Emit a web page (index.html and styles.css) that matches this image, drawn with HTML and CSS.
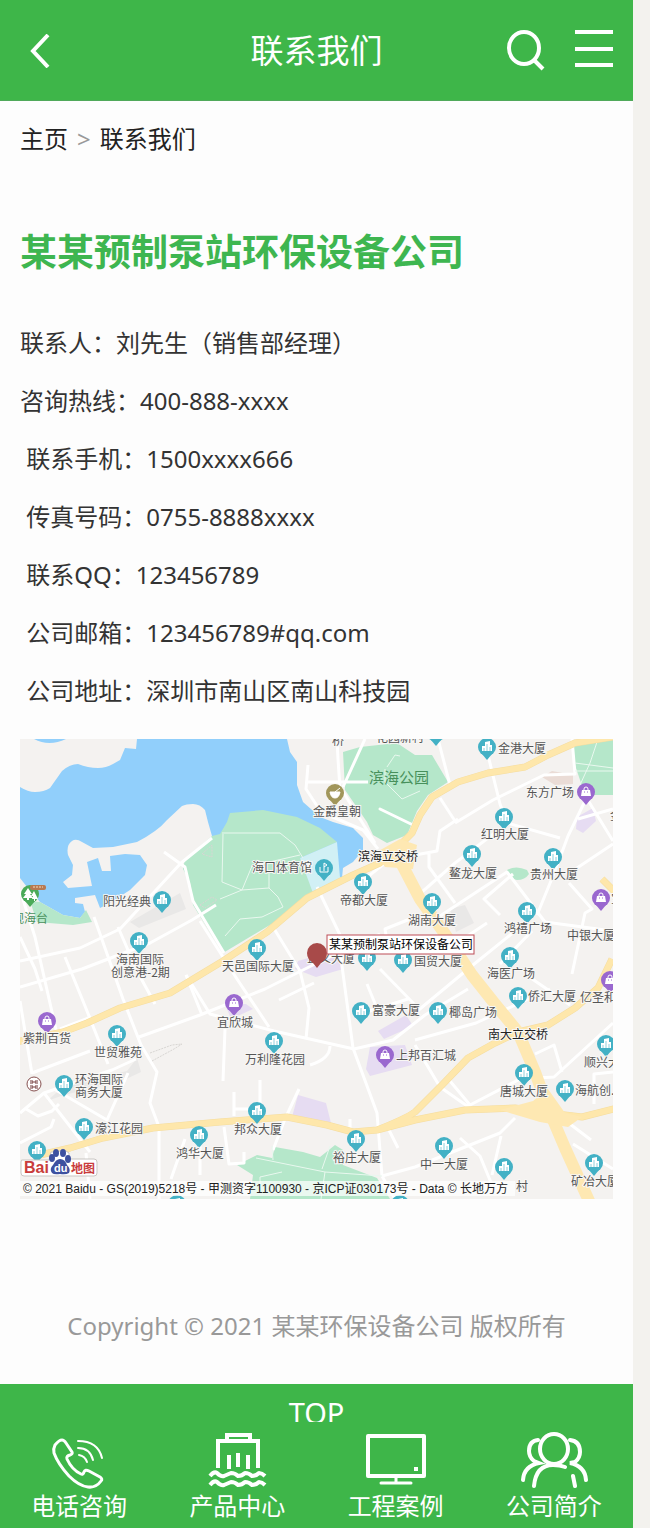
FILE: index.html
```html
<!DOCTYPE html>
<html lang="zh-CN">
  <head>
    <meta charset="utf-8">
    <meta name="viewport" content="width=device-width, initial-scale=1.0">

    <title>联系我们</title>

    <link rel="stylesheet" href="styles.css">
  </head>
  <body>
    <header class="header">
      <a class="back" href="#" aria-label="返回">
        <svg width="20" height="34" viewBox="0 0 20 34"><path d="M18 1L3 17l15 16" fill="none" stroke="#fff" stroke-width="4"/></svg>
      </a>
      <h1 class="title">联系我们</h1>
      <div class="tools">
        <button type="button" aria-label="搜索">
          <svg width="40" height="42" viewBox="0 0 40 42" fill="none" stroke="#fff" stroke-width="4"><ellipse cx="19" cy="19" rx="15" ry="16"/><path d="M28 30l10 10"/></svg>
        </button>
        <button type="button" aria-label="菜单">
          <svg width="38" height="40" viewBox="0 0 38 40" stroke="#fff" stroke-width="4"><path d="M0 2h38M0 19h38M0 35h38"/></svg>
        </button>
      </div>
    </header>

    <nav class="crumbs">
      <a href="#">主页</a><span>&gt;</span><a href="#">联系我们</a>
    </nav>

    <main class="content">
      <h2 class="company">某某预制泵站环保设备公司</h2>
      <div class="info">
        <p>联系人：刘先生（销售部经理）</p>
        <p>咨询热线：400-888-xxxx</p>
        <p>&nbsp;联系手机：1500xxxx666</p>
        <p>&nbsp;传真号码：0755-8888xxxx</p>
        <p>&nbsp;联系QQ：123456789</p>
        <p>&nbsp;公司邮箱：123456789#qq.com</p>
        <p>&nbsp;公司地址：深圳市南山区南山科技园</p>
      </div>

      <svg class="map" viewBox="0 0 593 460" role="img" aria-label="公司地图">
        <defs>
          <g id="drop">
            <circle r="9"/>
            <path d="M-5 7L0 13l5-6z"/>
          </g>
          <g id="office">
            <use href="#drop" fill="#43b1c5"/>
            <path d="M-5 4V-1h3v-4l5-1v4h2v6z" fill="#fff"/>
            <path d="M0 4v-7M3 4v-4M-3 4V1" stroke="#8fd0dc" fill="none"/>
          </g>
          <g id="shop">
            <use href="#drop" fill="#9a68cf"/>
            <path d="M-4-2h8l1 6H-5z" fill="#fff"/>
            <path d="M-2-2v-1a2 2 0 0 1 4 0v1" fill="none" stroke="#fff"/>
            <path d="M-2 0h1M1 0h1" stroke="#9a68cf"/>
          </g>
        </defs>

        <rect class="land" width="593" height="460"/>

        <!-- water -->
        <path class="water" d="M0 48Q8 53 15 53 24 53 30 49L42 32Q50 25 58 25 68 29 78 29 86 29 93 25L100 21 105 9 116 10 117 0H267L270 13 277 23V46L283 63 300 78 313 83 333 89 343 99V111L333 123 323 129 322 139 316 136 200 110 192 97 188 83 185 71Q180 65 173 65 166 65 162 67L147 81Q138 92 117 103L93 108 73 109 62 103Q56 99 52 102 46 106 48 116L53 126 52 136 43 143 48 149 72 147 67 123 78 119 82 132H91L90 117 105 115 120 116 127 126 125 136 110 151 90 164 80 169 75 156 55 159V164L63 165 65 173 60 179 43 176 20 163 7 148 0 139z"/>
        <path class="water" d="M14 0q15 8 32 0z"/>

        <!-- parks -->
        <path class="park" d="M192 97L200 95 207 83 210 74 243 71 277 78 300 89 317 103 280 119 303 149 255 183 203 214 173 166 170 143 163 130 165 120z"/>
        <path class="venue" d="M280 119L317 103 320 139 293 154z"/>
        <path class="park" d="M323 13L340 8 377 4 395 16H412L428 43 408 56 397 72 387 96 367 104 353 96 347 83 325 51z"/>
        <path class="park" d="M553 4L575 0H593V56L565 56 555 26z"/>
        <path class="park" d="M487 131q9-5 20 0l2 4q-4 6-12 6-9-2-10-10z"/>
        <path class="park" d="M255 408L283 413 300 418 315 406 323 411V426L357 439 370 460H230L233 436 217 426 237 416 252 419z"/>
        <path class="park" d="M10 162L20 163 43 176 60 179 66 171 72 183 53 186 17 183z"/>
        <g class="mall">
          <path d="M278 222L313 212 323 230 296 238 275 230z"/>
          <path d="M278 356L306 364 311 384 272 378z"/>
          <path d="M350 308L385 306 392 326 350 337 346 330z"/>
          <path d="M358 292L386 276 393 287 364 300z"/>
          <path d="M557 78L573 69 576 82 563 94 556 90z"/>
          <path d="M205 265h21l7 5-22 10z"/>
        </g>
        <path class="block" d="M110 183L160 154 166 170 119 189zM27 362L44 347 107 332 117 319 121 333 102 342 44 356zM430 170L445 166 454 184 436 193z"/>
        <path d="M522 38L532 32 553 36V45L535 46z" fill="#eadcd6"/>

        <!-- side streets -->
        <g class="street">
          <path d="M192 99L161 124 100 190 60 209 0 222M144 113L165 128 173 162 204 214"/>
          <path d="M0 248L62 230 130 204 172 181 196 166M0 198L15 230 22 252M74 178L103 260 121 306 137 333 130 364 139 388V460"/>
          <path d="M0 151L15 198 37 295M45 218L65 267 88 325M98 188L117 232 135 265"/>
          <path d="M0 262L12 335M12 334L70 312M0 374L24 354 92 331 116 320M40 290L71 278M119 298L180 276 245 250 303 221 360 195"/>
          <path d="M24 354L70 413M34 350L87 381 108 334M0 404L31 388 34 380M6 370L18 377 32 372 39 365"/>
          <path d="M249 288L217 240 180 182M166 236L190 275 254 292 334 310 373 301 405 276 448 250"/>
          <path d="M253 188L280 232 289 269 286 300M259 261L294 244M297 148L320 196V212L333 309 357 374 362 437M182 276L166 236"/>
          <path d="M320 50L318 20 317 0M288 26L286 50 301 73 343 91 358 110M286 43H348M323 48L345 0M320 48L355 104"/>
          <path d="M340 144L390 104M395 178L365 190 367 202"/>
          <path d="M418 0L430 46 438 42M466 8L480 65 487 84 540 99M435 84L473 61 524 36 555 35 552 0"/>
          <path d="M438 80L420 92 417 112 395 116M420 59L435 82M409 115V128L435 164M394 160L435 124 480 90"/>
          <path d="M566 60L548 97 535 132 517 176M566 58L593 102M548 135L593 105M593 70L558 80"/>
          <path d="M420 177L487 133 525 183 593 192"/>
          <path d="M493 135L464 160 480 176M549 144L572 170 565 174 552 235M467 184L425 212M505 184L448 230 395 274M512 192L480 225"/>
          <path d="M395 306L420 348 450 369M430 342L450 366 500 340 534 338 593 284M395 301L456 284 530 250M505 235L550 266"/>
          <path d="M360 230L399 270M347 245L356 267M340 275L388 260M310 307Q310 320 290 326"/>
          <path d="M515 315L534 306 542 333M574 365V335L593 333"/>
          <path d="M362 437L395 428 480 394 495 379M481 397L472 436M440 399L460 417 472 446M553 405L593 430M550 385L571 401"/>
          <path d="M205 290L203 342M214 353V377M240 341V370M214 370h23M279 350L265 380 253 411M204 388L209 425 224 424V413"/>
          <path d="M66 414L70 460M165 400L151 440M368 389L378 409M330 380V393M362 437L375 460M180 406V436"/>
        </g>

        <g class="path">
          <path d="M202 94H260L275 106 283 119M203 95L202 143 222 151 232 127 280 116M249 132V149L258 158 263 168M205 197L220 180 242 178 263 168M200 160L222 151 249 149"/>
          <path d="M365 30V43L382 60 400 52M367 28L375 16 380 17"/>
          <path d="M555 24L593 29M555 32H593M560 46L570 24 578 0"/>
          <path d="M236 419L305 433 362 437M302 430L310 407M252 407L253 421M240 448V438L262 433M301 460L305 433"/>
        </g>
        <path d="M360 70L393 86" fill="none" stroke="#fff" stroke-width="3" stroke-linecap="round"/>

        <!-- main roads -->
        <g class="casing">
          <path id="roadA" d="M-4 303L43 293 67 284 100 269 150 254 203 222 247 193 287 159 333 136 360 124 377 109 392 94 400 76 412 58 438 43 468 34 505 28 528 16 555 4 593-2"/>
          <path id="roadC" d="M20 416L50 409 83 399 133 389 200 383 267 378 307 386 333 393 357 391 395 381 445 371 495 369 528 374 562 378 597 369M357 391Q385 380 395 373L422 346 448 319 475 304 498 293 528 286 555 269 578 249 592 220M582 140L597 155"/>
        </g>
        <g class="main">
          <use href="#roadA"/>
          <use href="#roadC"/>
        </g>
        <path class="highway" d="M377 116L400 160 425 195 452 236 475 265 498 293 515 333 528 369 545 409 570 464"/>
        <path class="junction" d="M355 114L380 100 397 106 393 130 365 128zM480 371L513 362 528 350 545 374 562 378 548 388 520 383z"/>
        <path d="M130 314l22-8 10-1-8 5-22 12M182 115l10-9v12zM180 166l12-8 5 3-12 8z" fill="none" stroke="#d8d6d3" stroke-dasharray="2 1"/>

        <!-- places -->
        <use href="#office" x="467" y="8"/>
        <use href="#office" x="416" y="-6"/>
        <use href="#office" x="484" y="78"/>
        <use href="#office" x="452" y="115"/>
        <use href="#office" x="533" y="118"/>
        <use href="#office" x="412" y="163"/>
        <use href="#office" x="507" y="172"/>
        <use href="#drop" x="304" y="129" fill="#43b1c5"/>
        <path d="M304 132v-8l3 2-3 2M300 128v5h8v-5" fill="none" stroke="#fff"/>
        <use href="#office" x="343" y="143"/>
        <use href="#office" x="142" y="161"/>
        <use href="#office" x="119" y="202"/>
        <use href="#office" x="237" y="209"/>
        <use href="#office" x="347" y="219"/>
        <use href="#office" x="383" y="221"/>
        <use href="#office" x="490" y="217"/>
        <use href="#office" x="498" y="257"/>
        <use href="#office" x="418" y="272"/>
        <use href="#office" x="341" y="272"/>
        <use href="#office" x="97" y="295"/>
        <use href="#office" x="254" y="302"/>
        <use href="#office" x="44" y="345"/>
        <use href="#office" x="504" y="334"/>
        <use href="#office" x="545" y="350"/>
        <use href="#office" x="586" y="305"/>
        <use href="#office" x="64" y="388"/>
        <use href="#office" x="237" y="372"/>
        <use href="#office" x="179" y="396"/>
        <use href="#office" x="336" y="400"/>
        <use href="#office" x="424" y="407"/>
        <use href="#office" x="484" y="428"/>
        <use href="#office" x="574" y="424"/>
        <use href="#office" x="17" y="411"/>
        <use href="#office" x="157" y="465"/>
        <use href="#office" x="380" y="465"/>
        <use href="#shop" x="566" y="53"/>
        <use href="#shop" x="581" y="159"/>
        <use href="#shop" x="590" y="241"/>
        <use href="#shop" x="27" y="282"/>
        <use href="#shop" x="214" y="264"/>
        <use href="#shop" x="365" y="316"/>

        <use href="#drop" x="315" y="54" fill="#a1965b"/>
        <path d="M310 53h10q-1 6-5 6t-5-6M315 53l5-4" fill="#fff" stroke="#fff"/>
        <use href="#drop" x="10" y="155" fill="#4aaa58"/>
        <path d="M8 149l-4 6h2l-3 4h4v2h2v-2h4l-3-4h2zM14 152l-3 5h2l-1 3h2v2h1v-2h3z" fill="#fff"/>
        <rect x="10" y="146" width="16" height="5" rx="2" fill="#b77952"/>
        <path d="M13 148h10" stroke="#f4dfbd" stroke-dasharray="2 1"/>
        <circle cx="14" cy="345" r="7" fill="#fff" stroke="#86504f" stroke-width="1"/>
        <path d="M10 342h3v2h-3M18 342h-3v2h3M10 349h3v-2h-3M18 349h-3v-2h3" fill="none" stroke="#713939"/>

        <g class="names">
          <text x="312" y="6">桥</text>
          <text x="356" y="3">花园新村</text>
          <text x="478" y="14">金港大厦</text>
          <text x="506" y="58">东方广场</text>
          <text x="590" y="81">金</text>
          <text x="293" y="77">金爵皇朝</text>
          <text x="461" y="100">红明大厦</text>
          <text x="338" y="122" class="dark">滨海立交桥</text>
          <text x="232" y="133">海口体育馆</text>
          <text x="429" y="139">鳌龙大厦</text>
          <text x="510" y="140">贵州大厦</text>
          <text x="83" y="167">阳光经典</text>
          <text x="320" y="166">帝都大厦</text>
          <text x="388" y="186">湖南大厦</text>
          <text x="484" y="194">鸿禧广场</text>
          <text x="547" y="201">中银大厦</text>
          <text x="591" y="164">宝</text>
          <text x="96" y="225">海南国际</text>
          <text x="91" y="238">创意港-2期</text>
          <text x="202" y="232">天邑国际大厦</text>
          <text x="287" y="224">正义大厦</text>
          <text x="394" y="227">国贸大厦</text>
          <text x="467" y="239">海医广场</text>
          <text x="508" y="262">侨汇大厦</text>
          <text x="560" y="263">亿圣和</text>
          <text x="352" y="276">富豪大厦</text>
          <text x="429" y="278">椰岛广场</text>
          <text x="197" y="288">宜欣城</text>
          <text x="3" y="304">紫荆百货</text>
          <text x="74" y="318">世贸雅苑</text>
          <text x="225" y="325">万利隆花园</text>
          <text x="376" y="321">上邦百汇城</text>
          <text x="468" y="300" class="dark">南大立交桥</text>
          <text x="564" y="328">顺兴大</text>
          <text x="55" y="345">环海国际</text>
          <text x="55" y="358">商务大厦</text>
          <text x="480" y="357">唐城大厦</text>
          <text x="555" y="356">海航创...</text>
          <text x="75" y="394">濠江花园</text>
          <text x="214" y="395">邦众大厦</text>
          <text x="156" y="419">鸿华大厦</text>
          <text x="313" y="423">裕庄大厦</text>
          <text x="400" y="430">中一大厦</text>
          <text x="551" y="447">矿冶大厦</text>
          <text x="496" y="452">村</text>
        </g>
        <text class="park-name scenic" x="349" y="44">滨海公园</text>
        <text class="park-name" x="-8" y="184">观海台</text>

        <!-- company marker -->
        <path d="M287 214a10 10 0 0 1 20 0q0 6-6 10l-4 5-4-5q-6-4-6-10z" fill="#a84a49"/>
        <rect x="307" y="196" width="147" height="19" fill="#fff" stroke="#bd4d56"/>
        <text class="marker-name" x="309" y="210">某某预制泵站环保设备公司</text>

        <!-- map provider -->
        <rect x="0" y="442" width="495" height="15" fill="#fff" opacity=".72"/>
        <path d="M3 421h26l2-8h7l5-3 6 4v6h25q3 0 3 3v11q0 3-3 3H4q-3 0-3-3v-11q0-3 2-2z" fill="#fff" stroke="#c9c6c3"/>
        <text class="logo" x="4" y="434">Bai</text>
        <g fill="#3d51a0">
          <path d="M40 420q-4 0-7 6-4 4-1 8 2 2 8 1 6 1 9-1 2-4-2-8-2-6-7-6z"/>
          <ellipse cx="32" cy="419" rx="3" ry="4"/>
          <ellipse cx="36" cy="414" rx="3" ry="4"/>
          <ellipse cx="43" cy="414" rx="3" ry="4"/>
          <ellipse cx="48" cy="420" rx="3" ry="4"/>
        </g>
        <text class="logo-du" x="34" y="433">du</text>
        <text class="logo-map" x="51" y="434">地图</text>
        <text class="source" x="3" y="454">© 2021 Baidu - GS(2019)5218号 - 甲测资字1100930 - 京ICP证030173号 - Data © 长地万方</text>
      </svg>
    </main>

    <footer class="copyright">Copyright © 2021 某某环保设备公司 版权所有</footer>
    <a class="top" href="#">TOP</a>

    <nav class="tabbar">
      <a href="#">
        <svg width="60" height="60" viewBox="0 0 60 60" fill="none" stroke="#fff" stroke-width="3" stroke-linecap="round" stroke-linejoin="round">
          <path d="M6 15q4-5 7-5 2 0 4 3l6 9q1 2-2 3-4 1-3 4 5 11 14 15 2 1 3-2 1-3 5-1l11 6q3 2 1 4-5 7-13 6Q30 56 20 46 9 34 5 23q-1-4 1-8z"/>
          <path stroke-width="2" d="M29 11q20 0 24 17M29 18q12 0 15 12M30 25q6 1 8 7"/>
        </svg>
        <span>电话咨询</span>
      </a>
      <a href="#">
        <svg width="60" height="60" viewBox="0 0 60 60" fill="none" stroke="#fff" stroke-width="4">
          <path d="M11 38V11h40v27M20 10V5h23v5M22 25v14M31 23v14M41 25v14"/>
          <path stroke-linejoin="round" d="M3 46q4-5 7-3 4 4 7 3l7-3q4 0 7 3 4 0 7-3 4 0 7 3 4 0 7-3 3 0 6 3M3 55q4-5 7-3 4 4 7 3l7-3q4 0 7 3 4 0 7-3 4 0 7 3 4 0 7-3 3 0 6 3"/>
        </svg>
        <span>产品中心</span>
      </a>
      <a href="#">
        <svg width="60" height="60" viewBox="0 0 60 60" fill="none" stroke="#fff" stroke-width="4">
          <path stroke-linejoin="round" d="M2 6h56v40H2z"/>
          <path stroke-width="3" stroke-linecap="round" d="M30 48v4M15 53h30"/>
          <path d="M48 39h4"/>
        </svg>
        <span>工程案例</span>
      </a>
      <a href="#">
        <svg width="68" height="60" viewBox="0 0 68 60" fill="none" stroke="#fff" stroke-width="4" stroke-linecap="round">
          <ellipse cx="34" cy="19" rx="14" ry="15"/>
          <path d="M14 56q2-21 19-21 7 0 12 2M53 46l2 10M18 10Q9 11 9 21q0 6 5 10l5 2Q4 36 3 50M50 10q10 1 10 12 0 6-5 10l-5 1q15 3 16 17"/>
        </svg>
        <span>公司简介</span>
      </a>
    </nav>
  </body>
</html>
```

FILE: styles.css
```css
* {
  box-sizing: border-box;
}
body {
  margin: 0;
  padding-right: 17px;
  font-family: "Noto Sans", "Noto Sans CJK SC", sans-serif;
  font-size: 24px;
  color: #333;
  background: linear-gradient(to left, #f3f2ee 17px, #fdfdfd 17px);
}
a {
  color: inherit;
  text-decoration: none;
}
h1, h2, p {
  margin: 0;
}
svg {
  display: block;
}
.header {
  display: grid;
  grid-template-columns: 1fr auto 1fr;
  align-items: center;
  height: 101px;
  padding: 2px 20px 0;
  color: #fff;
  background-color: #3eb649;
  border-bottom: 1px solid #50a95a;
}
.back {
  padding-left: 10px;
}
.title {
  font-size: 33px;
  font-weight: 400;
  line-height: 48px;
}
.tools {
  display: flex;
  justify-content: flex-end;
  align-items: center;
  gap: 30px;
}
.tools button {
  padding: 0 0 2px;
  border: 0;
  background: none;
  cursor: pointer;
}
.crumbs {
  display: flex;
  gap: 9px;
  padding: 18px 20px;
  line-height: 40px;
  color: #222;
}
.crumbs span {
  color: #999;
}
.content {
  padding: 45px 20px 0;
}
.company {
  font-size: 37px;
  line-height: 60px;
  color: #3eb650;
}
.info {
  padding: 32px 0 19px;
  line-height: 58px;
}
.map {
  width: 100%;
  height: auto;
  overflow: hidden;
}
.copyright {
  padding: 97px 20px 28px;
  line-height: 60px;
  text-align: center;
  color: #999;
}
.top {
  display: block;
  height: 38px;
  overflow: hidden;
  font-size: 29px;
  line-height: 58px;
  text-align: center;
  color: #fff;
  background-color: #3eb649;
}
.tabbar {
  position: sticky;
  bottom: 0;
  display: grid;
  grid-template-columns: repeat(4, 1fr);
  padding: 8px 0 6px;
  line-height: 32px;
  color: #fff;
  background-color: #3eb649;
}
.tabbar a {
  display: flex;
  flex-direction: column;
  align-items: center;
}

/* map */
.land {
  fill: #f4f2f0;
}
.water {
  fill: #91cffb;
}
.park {
  fill: #b5e7ca;
}
.venue {
  fill: #d1f0f5;
}
.mall {
  fill: #e6dcf2;
}
.block {
  fill: #e9e8e7;
}
.street {
  fill: none;
  stroke: #fff;
  stroke-width: 3;
  stroke-linejoin: round;
}
.path {
  fill: none;
  stroke: #e9f8ef;
  stroke-width: 1;
}
.casing {
  fill: none;
  stroke: #f5dda0;
  stroke-width: 7;
  stroke-linejoin: round;
}
.main {
  fill: none;
  stroke: #fee7ab;
  stroke-width: 6;
}
.highway {
  fill: none;
  stroke: #fee8b2;
  stroke-width: 12;
  stroke-linejoin: round;
}
.junction {
  fill: #fee8b2;
}
.names {
  font-family: "Noto Sans CJK SC", sans-serif;
  font-size: 12px;
  fill: #555;
  stroke: #f8f7f5;
  stroke-width: 2;
  paint-order: stroke;
}
.dark {
  fill: #222;
}
.park-name {
  font-size: 12px;
  fill: #47905b;
}
.scenic {
  font-size: 15px;
}
.marker-name {
  font-family: "Noto Sans CJK SC", sans-serif;
  font-size: 12px;
  fill: #000;
}
.source {
  font-family: "Liberation Sans", "Noto Sans CJK SC", sans-serif;
  font-size: 12px;
  fill: #222;
}
.logo, .logo-map {
  font-family: "Liberation Sans", "Noto Sans CJK SC", sans-serif;
  font-weight: 700;
  fill: #c93c3c;
}
.logo {
  font-size: 16px;
}
.logo-map {
  font-size: 12px;
}
.logo-du {
  font-family: "Liberation Sans", sans-serif;
  font-size: 11px;
  font-weight: 700;
  fill: #fff;
}
```
